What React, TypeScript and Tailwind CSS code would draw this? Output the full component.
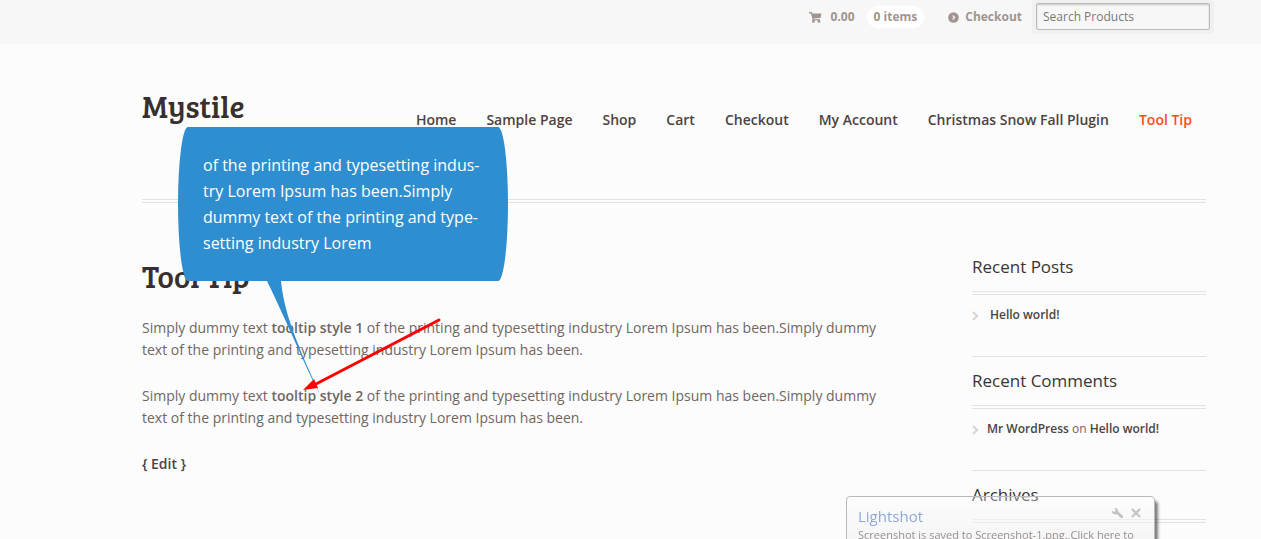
import React from 'react'

const navItems = [
  'Home',
  'Sample Page',
  'Shop',
  'Cart',
  'Checkout',
  'My Account',
  'Christmas Snow Fall Plugin',
  'Tool Tip',
]

const paragraphs = ['tooltip style 1', 'tooltip style 2']

function CartIcon() {
  return (
    <svg width="13" height="11" viewBox="0 0 14 12" fill="currentColor">
      <path d="M0 0H3L3.6 1.5H13.5L12.5 6.6L5 7.2V7.8H12V9.2H3.6V7L2 1.5H0Z" />
      <circle cx="4.8" cy="10.3" r="1.5" />
      <circle cx="10.8" cy="10.3" r="1.5" />
    </svg>
  )
}

function CircleArrowIcon() {
  return (
    <svg width="11" height="11" viewBox="0 0 11 11">
      <circle cx="5.5" cy="5.5" r="5.3" fill="currentColor" />
      <path d="M4.6 3.5L6.6 5.5L4.6 7.5" stroke="#f7f7f7" strokeWidth="1.2" fill="none" />
    </svg>
  )
}

function Bullet() {
  return (
    <svg width="7" height="10" viewBox="0 0 7 10" className="mt-[2px] shrink-0" fill="none" stroke="#ded6d3" strokeWidth="2.4">
      <path d="M1 1L5 5L1 9" />
    </svg>
  )
}

function Widget({ title, children }: { title: string; children: React.ReactNode }) {
  return (
    <section className="mb-3 border-b border-[#e5e1e1] pb-[29px]">
      <h3 className="text-[17px] leading-6 text-[#3a3434]">{title}</h3>
      <div className="mt-3 h-1 border-y border-[#e5e1e1]" />
      <ul className="mt-2 text-xs leading-6 text-[#6f6663]">{children}</ul>
    </section>
  )
}

function Tooltip() {
  return (
    <div className="absolute top-[127px] left-[178px] z-10 w-[330px]">
      <div className="rounded-[10px/77px] bg-[#2f8ecf] px-[25px] py-[25px] text-base leading-[26px] text-white">
        of the printing and typesetting indus-
        <br />
        try Lorem Ipsum has been.Simply
        <br />
        dummy text of the printing and type-
        <br />
        setting industry Lorem
      </div>
      <svg className="ml-[88px] block" width="56" height="114" viewBox="0 0 56 114">
        <path d="M1 0H15C18 32 32 66 54 113C40 88 23 45 1 0Z" fill="#2f8ecf" />
      </svg>
    </div>
  )
}

function Notification() {
  return (
    <div className="fixed top-[496px] right-[106px] z-10 h-24 w-[309px] rounded-[4px] border border-[#b9b9b9] bg-linear-to-b from-white/30 to-[#f0f0f0]/80 to-60% px-[11px] pt-[7px] shadow-[3px_5px_3px_rgba(0,0,0,0.5)]">
      <div className="flex items-center justify-between">
        <h4 className="text-[15px] leading-6 text-[#8fa8dc]">Lightshot</h4>
        <div className="flex gap-2 pr-[2px] pb-[7px] text-[#c4c4c4]">
          <button aria-label="Settings">
            <svg width="11" height="10" viewBox="0 0 11 10">
              <path
                d="M3 0A3.1 3.1 0 0 1 6.2 3.6L10.6 7.6A1.4 1.4 0 0 1 8.6 9.8L4.6 6A3.1 3.1 0 0 1 0 2.5L2.2 4L3.8 2.6L2.2 0.2Z"
                fill="currentColor"
              />
            </svg>
          </button>
          <button aria-label="Close">
            <svg width="10" height="10" viewBox="0 0 10 10" stroke="currentColor" strokeWidth="2.4">
              <path d="M1 1L9 9M9 1L1 9" />
            </svg>
          </button>
        </div>
      </div>
      <p className="text-[11px] leading-[14px] whitespace-nowrap text-[#978f8f]">
        Screenshot is saved to Screenshot-1.png. Click here to
      </p>
    </div>
  )
}

export default function App() {
  return (
    <div className="relative h-screen overflow-hidden bg-[#fcfcfc] font-['Open_Sans',sans-serif] text-sm text-[#6f6663]">
      <div className="flex h-11 items-start justify-end bg-[#f7f7f7] pr-[47px] text-xs font-bold text-[#a0948f]">
        <a href="#" className="mt-[6px] flex items-center leading-[22px]">
          <CartIcon />
          <span className="ml-[9px]">0.00</span>
          <span className="ml-3 rounded-full bg-white px-[7px]">0 items</span>
        </a>
        <a href="#" className="mt-[6px] ml-6 flex items-center gap-[6px] leading-[22px]">
          <CircleArrowIcon />
          Checkout
        </a>
        <div className="ml-[10px] rounded-[4px] bg-[#f0f0f0] p-1 pt-[3px]">
          <input
            type="text"
            aria-label="Search Products"
            placeholder="Search Products"
            className="block h-[27px] w-[174px] rounded-[2px] border border-[#bbb] bg-[#f7f7f7] px-[6px] font-normal shadow-[inset_0_1px_2px_rgba(0,0,0,0.2)] outline-none placeholder:text-[#777]"
          />
        </div>
      </div>

      <div className="mr-[55px] ml-[142px]">
        <header className="flex h-[155px] items-start justify-between">
          <h1 className="mt-11 font-['Bree_Serif','DejaVu_Serif',serif] text-[31px] leading-9 text-[#37302d]">
            Mystile
          </h1>
          <nav className="mt-16 mr-[14px] flex gap-[30px] font-semibold text-[#4b4341]">
            {navItems.map(item => (
              <a
                key={item}
                href="#"
                className={`leading-6 whitespace-nowrap ${item === 'Tool Tip' ? 'text-[#ff4c1a]' : ''}`}
              >
                {item}
              </a>
            ))}
          </nav>
        </header>
        <div className="h-1 border-y border-[#e5e1e1]" />

        <div className="flex justify-between pt-[52px]">
          <main className="w-[748px]">
            <h2 className="font-['Bree_Serif','DejaVu_Serif',serif] text-[31px] leading-[42px] text-[#37302d]">
              Tool Tip
            </h2>
            {paragraphs.map(label => (
              <p key={label} className="mt-5 mb-6 leading-[22px]">
                Simply dummy text <strong className="font-semibold">{label}</strong> of the printing and typesetting
                industry Lorem Ipsum has been.Simply dummy text of the printing and typesetting industry Lorem Ipsum has
                been.
              </p>
            ))}
            <a href="#" className="leading-[22px] font-semibold text-[#4b4341]">
              {'{ Edit }'}
            </a>
          </main>

          <aside className="w-[234px]">
            <Widget title="Recent Posts">
              <li className="flex items-center gap-[11px]">
                <Bullet />
                <a href="#" className="font-semibold text-[#4b4341]">Hello world!</a>
              </li>
            </Widget>
            <Widget title="Recent Comments">
              <li className="flex items-center gap-2">
                <Bullet />
                <span>
                  <a href="#" className="font-semibold text-[#4b4341]">Mr WordPress</a> on{' '}
                  <a href="#" className="font-semibold text-[#4b4341]">Hello world!</a>
                </span>
              </li>
            </Widget>
            <Widget title="Archives">
              <li className="flex items-center gap-2">
                <Bullet />
                <a href="#" className="font-semibold text-[#4b4341]">November 2015</a>
              </li>
            </Widget>
          </aside>
        </div>
      </div>

      <Tooltip />

      <svg className="absolute top-[314px] left-[300px] z-20" width="146" height="80" viewBox="0 0 146 80">
        <path d="M139 6L16 70" stroke="#f00" strokeWidth="3" strokeLinecap="round" />
        <path d="M3 76L14 65L18 74Z" fill="#f00" />
      </svg>

      <Notification />
    </div>
  )
}
